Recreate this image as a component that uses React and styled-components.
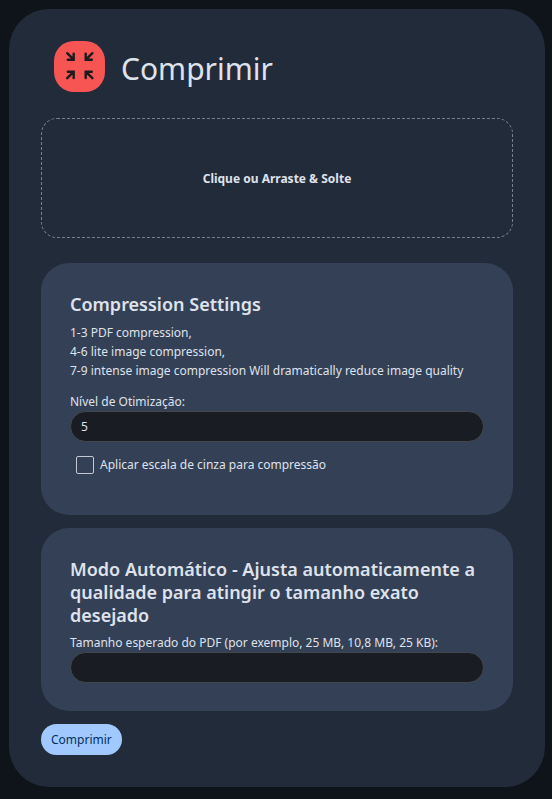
import React, { useState } from 'react';
import styled, { createGlobalStyle } from 'styled-components';

const GlobalStyle = createGlobalStyle`
  * {
    box-sizing: border-box;
  }

  body {
    margin: 0;
    background: #0f131a;
    color: #dfe2eb;
    font-family: 'Noto Sans', 'Open Sans', sans-serif;
    font-size: 12px;
    line-height: 19px;
  }
`;

const Page = styled.main`
  padding: 9px 7px 12px 9px;
`;

const Panel = styled.section`
  padding: 32px;
  border-radius: 40px;
  background: #222b39;
`;

const Header = styled.header`
  display: flex;
  align-items: center;
  gap: 16px;
  padding-left: 13px;
  margin-bottom: 26px;
`;

const ToolIcon = styled.svg`
  width: 51px;
  height: 51px;
  flex-shrink: 0;
  border-radius: 20px;
  background: #f75454;
`;

const Title = styled.h1`
  margin: 0;
  padding-top: 4px;
  font-size: 30px;
  font-weight: 400;
  line-height: 40px;
`;

const DropZone = styled.button`
  display: block;
  width: 100%;
  height: 120px;
  margin-bottom: 25px;
  border: 1px dashed #78808d;
  border-radius: 16px;
  background: transparent;
  color: inherit;
  font: inherit;
  font-weight: 700;
  cursor: pointer;
`;

const Form = styled.form`
  display: flex;
  flex-direction: column;
  align-items: flex-start;
  gap: 13px;
`;

const Card = styled.div`
  width: 100%;
  padding: 30px 29px 28px;
  border-radius: 28px;
  background: #344056;
`;

const CardTitle = styled.h2`
  margin: 0 0 7px;
  font-size: 18px;
  font-weight: 600;
  line-height: 23px;
`;

const Help = styled.p`
  margin: 0 0 13px;
`;

const Field = styled.label`
  display: block;
  line-height: 18px;
`;

const TextInput = styled.input`
  display: block;
  width: 100%;
  height: 31px;
  padding: 0 10px;
  border: 1px solid #42474e;
  border-radius: 16px;
  outline: none;
  background: #191c23;
  color: inherit;
  font: inherit;
`;

const CheckRow = styled.label`
  display: flex;
  align-items: center;
  gap: 6px;
  padding: 13px 6px;
`;

const Checkbox = styled.input`
  appearance: none;
  width: 18px;
  height: 18px;
  margin: 0;
  border: 1px solid #c3c9d3;
  border-radius: 2px;

  &:checked {
    background: #a2c9ff;
  }
`;

const Submit = styled.button`
  height: 31px;
  padding: 0 10px;
  border: 0;
  border-radius: 16px;
  background: #a2c9ff;
  color: #00315c;
  font: inherit;
  cursor: pointer;
`;

function CompressIcon() {
  return (
    <ToolIcon viewBox="0 0 51 51" fill="none" stroke="#1c1c1f" strokeWidth="2.4" strokeLinecap="round" aria-hidden="true">
      <path d="M13.2 12.2 L19.2 18.2 M19.7 12.6 V18.7 H13.8" />
      <path d="M38.4 12.2 L32.4 18.2 M31.7 12.6 V18.7 H37.8" />
      <path d="M13.2 37.2 L19.2 31.2 M19.7 37 V30.7 H13.8" />
      <path d="M38.4 37.2 L32.4 31.2 M31.7 37 V30.7 H37.8" />
    </ToolIcon>
  );
}

function App() {
  const [level, setLevel] = useState('5');
  const [grayscale, setGrayscale] = useState(false);
  const [size, setSize] = useState('');

  return (
    <Page>
      <GlobalStyle />
      <Panel>
        <Header>
          <CompressIcon />
          <Title>Comprimir</Title>
        </Header>

        <DropZone type="button">Clique ou Arraste &amp; Solte</DropZone>

        <Form onSubmit={(e) => e.preventDefault()}>
          <Card>
            <CardTitle>Compression Settings</CardTitle>
            <Help>
              1-3 PDF compression,
              <br />
              4-6 lite image compression,
              <br />
              7-9 intense image compression Will dramatically reduce image quality
            </Help>
            <Field htmlFor="level">Nível de Otimização:</Field>
            <TextInput id="level" value={level} onChange={(e) => setLevel(e.target.value)} />
            <CheckRow>
              <Checkbox
                type="checkbox"
                checked={grayscale}
                onChange={(e) => setGrayscale(e.target.checked)}
              />
              Aplicar escala de cinza para compressão
            </CheckRow>
          </Card>

          <Card>
            <CardTitle>
              Modo Automático - Ajusta automaticamente a qualidade para atingir o tamanho exato desejado
            </CardTitle>
            <Field htmlFor="size">Tamanho esperado do PDF (por exemplo, 25 MB, 10,8 MB, 25 KB):</Field>
            <TextInput id="size" value={size} onChange={(e) => setSize(e.target.value)} />
          </Card>

          <Submit type="submit">Comprimir</Submit>
        </Form>
      </Panel>
    </Page>
  );
}

export default App;
